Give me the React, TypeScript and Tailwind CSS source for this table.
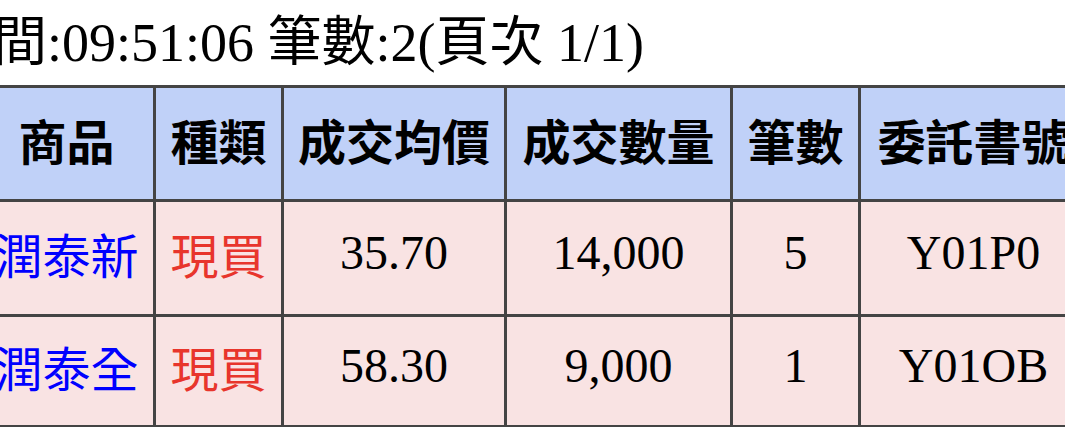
type Trade = {
  name: string;
  kind: string;
  price: string;
  qty: string;
  count: string;
  orderNo: string;
};

const trades: Trade[] = [
  { name: '潤泰新', kind: '現買', price: '35.70', qty: '14,000', count: '5', orderNo: 'Y01P0' },
  { name: '潤泰全', kind: '現買', price: '58.30', qty: '9,000', count: '1', orderNo: 'Y01OB' },
];

const headers = ['商品', '種類', '成交均價', '成交數量', '筆數', '委託書號'];
const widths = ['w-[176px]', 'w-[128px]', 'w-[223px]', 'w-[226px]', 'w-[128px]', 'w-[228px]'];

const cell = 'border-[3px] border-[#444444] text-center align-middle whitespace-nowrap px-0 pt-0 pb-[10px]';

export default function App() {
  return (
    <div className="w-[1065px] h-[427px] overflow-hidden bg-white text-black font-['Liberation_Serif','Noto_Sans_CJK_TC',serif]">
      <div className="h-[85px] pt-[3px] leading-[81px] text-[54px] -ml-[61px] whitespace-nowrap">
        時間:09:51:06 筆數:2(頁次 1/1)
      </div>
      <table className="table-fixed border-collapse -ml-[23px] w-[1109px]">
        <colgroup>
          {widths.map((w) => (
            <col key={w} className={w} />
          ))}
        </colgroup>
        <thead>
          <tr className="h-[114px] bg-[#c0d1f8]">
            {headers.map((h) => (
              <th
                key={h}
                className={`${cell} text-[48px] font-bold font-['Noto_Sans_CJK_TC',sans-serif]`}
              >
                {h}
              </th>
            ))}
          </tr>
        </thead>
        <tbody>
          {trades.map((t, i) => (
            <tr
              key={t.orderNo}
              className={`${i === 0 ? 'h-[115px]' : 'h-[111px]'} bg-[#f9e3e3] text-[48px]`}
            >
              <td className={`${cell} text-[#0000ff] font-['Noto_Sans_CJK_TC',sans-serif]`}>
                {t.name}
              </td>
              <td className={`${cell} text-[#e8352c] font-['Noto_Sans_CJK_TC',sans-serif]`}>
                {t.kind}
              </td>
              <td className={cell}>{t.price}</td>
              <td className={cell}>{t.qty}</td>
              <td className={cell}>{t.count}</td>
              <td className={cell}>{t.orderNo}</td>
            </tr>
          ))}
        </tbody>
      </table>
    </div>
  );
}
